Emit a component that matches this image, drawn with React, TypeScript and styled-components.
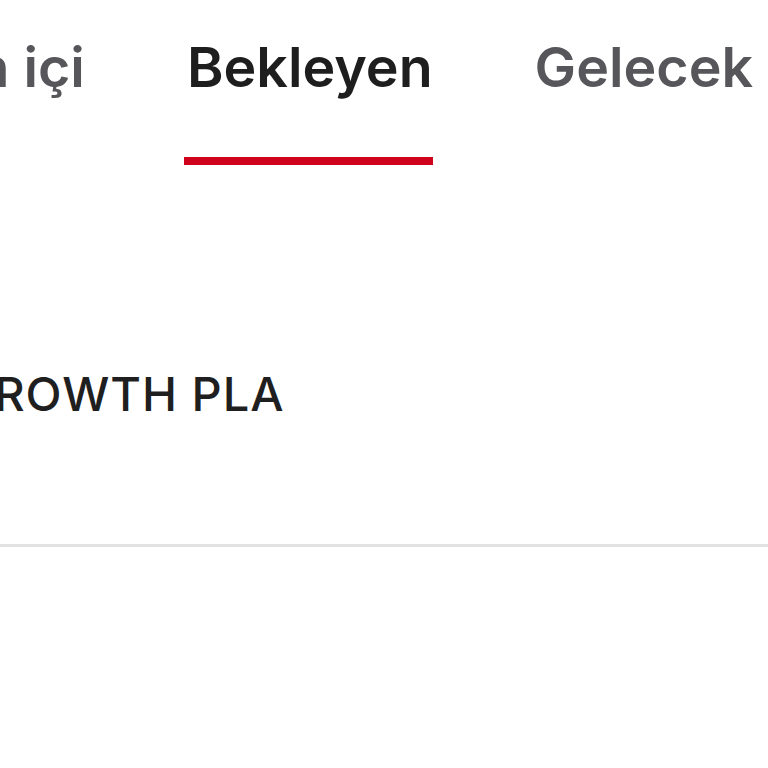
import React from "react";
import styled, { createGlobalStyle } from "styled-components";

const Global = createGlobalStyle`
  html, body { margin: 0; padding: 0; background: #ffffff; }
  body { font-family: Inter, "Noto Sans", sans-serif; }
`;

const Screen = styled.div`
  width: 768px;
  height: 768px;
  overflow: hidden;
  background: #ffffff;
  display: flex;
  flex-direction: column;
`;

const TabBar = styled.div`
  display: flex;
  align-items: flex-start;
  gap: 102px;
  margin-left: -100px;
  padding-top: 35px;
  height: 130px;
`;

const Tab = styled.div<{ $active?: boolean }>`
  display: flex;
  flex-direction: column;
  flex: none;
  font-size: 55.5px;
  font-weight: 600;
  letter-spacing: 0;
  line-height: 64px;
  white-space: nowrap;
  color: ${(p) => (p.$active ? "#1e1e1e" : "#57575b")};
`;

const Indicator = styled.div`
  height: 8px;
  margin-top: 58px;
  margin-left: -3px;
  background: #d0021b;
`;

const Title = styled.div`
  margin-top: 200px;
  margin-left: -42px;
  font-size: 47px;
  font-weight: 500;
  letter-spacing: 1px;
  color: #1f1f1f;
  white-space: nowrap;
`;

const Divider = styled.div`
  margin-top: 122px;
  height: 3px;
  background: #e2e2e2;
`;

const tabs = ["Gün içi", "Bekleyen", "Gelecek"];

export default function App() {
  return (
    <>
      <Global />
      <Screen>
        <TabBar>
          {tabs.map((t) => (
            <Tab key={t} $active={t === "Bekleyen"}>
              {t}
              {t === "Bekleyen" && <Indicator />}
            </Tab>
          ))}
        </TabBar>
        <Title>GROWTH PLA</Title>
        <Divider />
      </Screen>
    </>
  );
}
